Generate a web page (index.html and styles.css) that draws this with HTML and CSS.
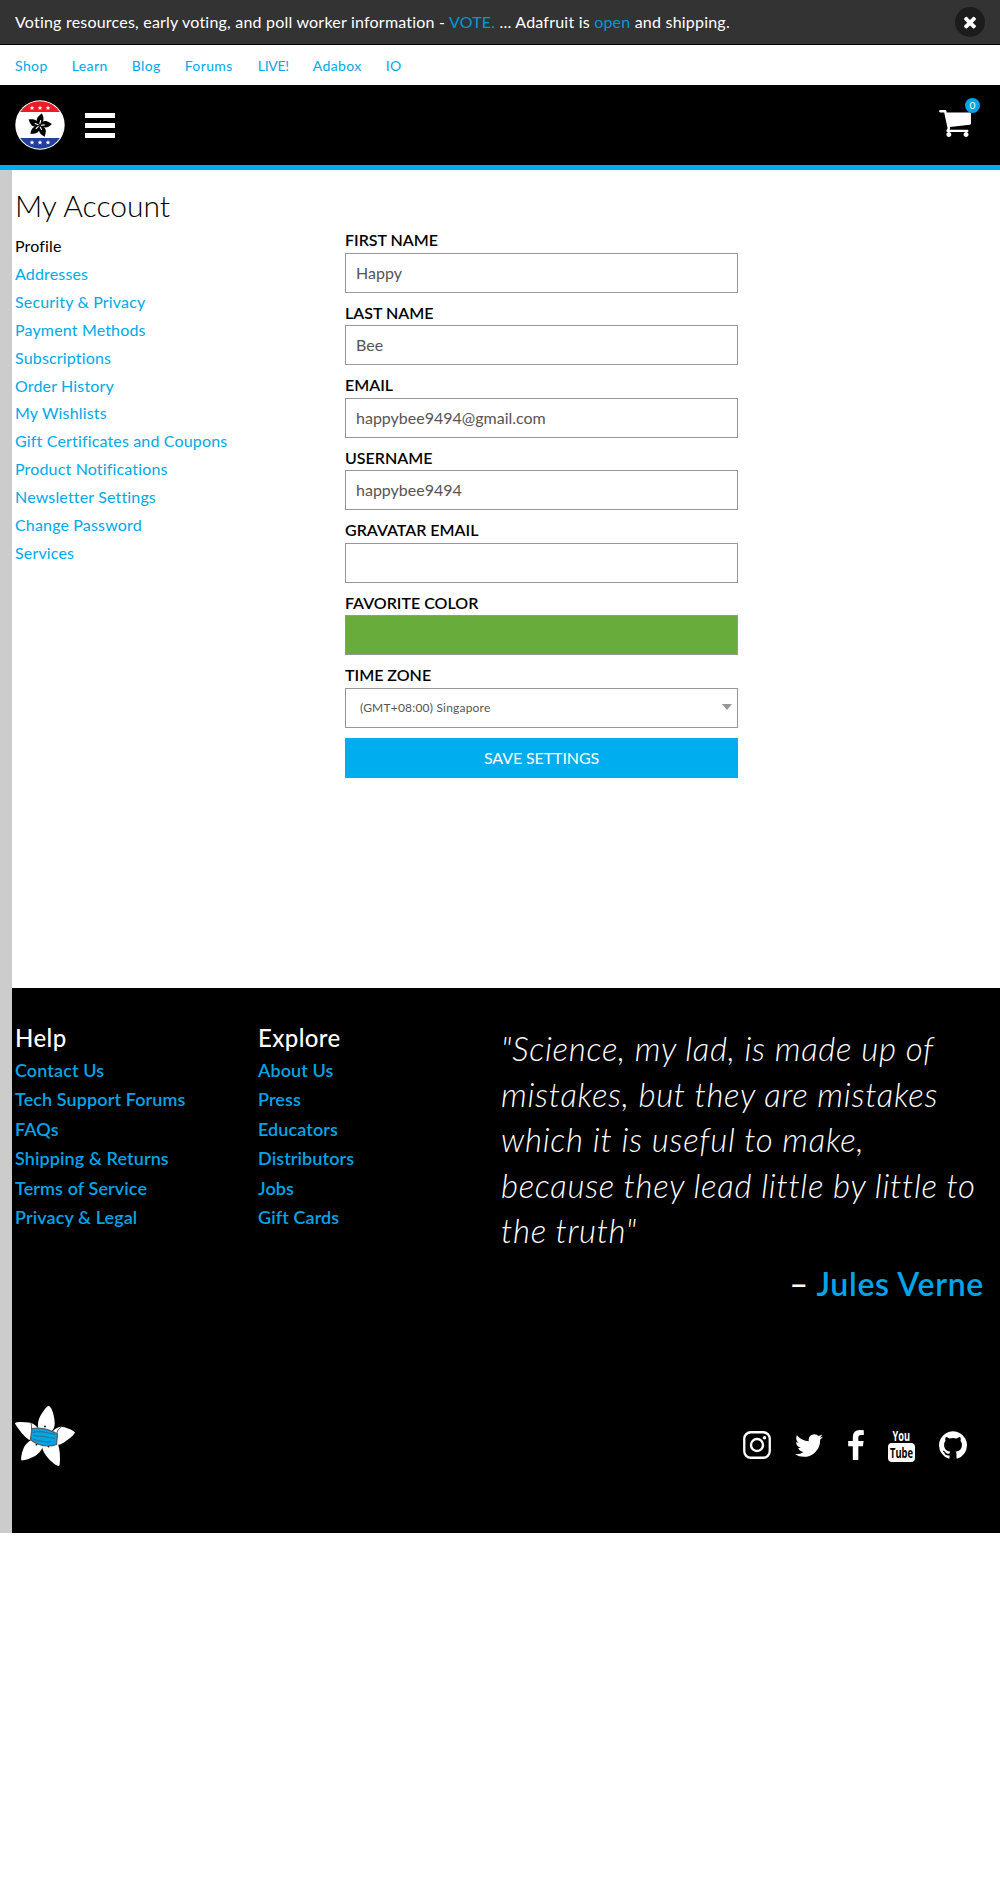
FILE: index.html
```html
<!DOCTYPE html>
<html lang="en">
<head>
<meta charset="utf-8">
<title>My Account</title>
<link rel="stylesheet" href="styles.css">
</head>
<body>
<div class="banner">
  <p class="banner-text">Voting resources, early voting, and poll worker information - <a href="#">VOTE.</a> ... Adafruit is <a href="#">open</a> and shipping.</p>
  <button class="close" aria-label="Close"><svg viewBox="0 0 1792 1792" width="18" height="18"><path d="M1490 1322q0 40-28 68l-136 136q-28 28-68 28t-68-28l-294-294-294 294q-28 28-68 28t-68-28l-136-136q-28-28-28-68t28-68l294-294-294-294q-28-28-28-68t28-68l136-136q28-28 68-28t68 28l294 294 294-294q28-28 68-28t68 28l136 136q28 28 28 68t-28 68l-294 294 294 294q28 28 28 68z"/></svg></button>
</div>
<nav class="sites">
  <a href="#">Shop</a><a href="#">Learn</a><a href="#">Blog</a><a href="#">Forums</a><a class="live" href="#">LIVE!</a><a href="#">Adabox</a><a href="#">IO</a>
</nav>
<header class="header">
  <svg class="logo" viewBox="0 0 50 50" width="50" height="50">
    <defs>
      <clipPath id="disc"><circle cx="25" cy="25" r="23.8"/></clipPath>
      <path id="star" d="M0-2.400.700-.800 2.300-.700 1.100.400 1.500 2 0 1.100-1.500 2-1.100.400-2.300-.700-.700-.800z"/>
      <path id="petal" d="M0 0C-3-2-4.200-5-3.200-7.500-2-10-.6-10.600.6-12.500 2-10.500 3.600-8 3-5 2.500-3 1.500-1.500 0 0z"/>
    </defs>
    <circle cx="25" cy="25" r="24.700" fill="#fff"/>
    <g clip-path="url(#disc)"><path fill="#ed1c24" d="M0 0h50v12H0z"/><path fill="#21409a" d="M0 38h50v12H0z"/></g>
    <g fill="#fff"><use href="#star" x="17" y="8"/><use href="#star" x="25" y="8"/><use href="#star" x="33" y="8"/><use href="#star" x="17" y="42.500"/><use href="#star" x="25" y="42.500"/><use href="#star" x="33" y="42.500"/></g>
    <g transform="translate(24.500 25.500)" fill="#000"><use href="#petal" transform="rotate(8)"/><use href="#petal" transform="rotate(80)"/><use href="#petal" transform="rotate(152)"/><use href="#petal" transform="rotate(224)"/><use href="#petal" transform="rotate(296)"/>
    <path d="M.4-1.800 1.200-5M1.800-.2 4.800-.6M.8 1.700 2 4M-1.300 1.200-3.400 3M-1.500-.8-4.300-2" stroke="#fff" stroke-width="1.100" stroke-linecap="round"/></g>
  </svg>
  <button class="menu" aria-label="Menu"><span></span><span></span><span></span></button>
  <a class="cart" href="#" aria-label="Cart"><svg viewBox="64 256 1664 1408" width="32" height="27"><path d="M704 1536q0 52-38 90t-90 38-90-38-38-90 38-90 90-38 90 38 38 90zm896 0q0 52-38 90t-90 38-90-38-38-90 38-90 90-38 90 38 38 90zm128-1088v512q0 24-16.500 42.500t-40.500 21.500l-1044 122q13 60 13 70 0 16-24 64h920q26 0 45 19t19 45-19 45-45 19h-1024q-26 0-45-19t-19-45q0-11 8-31.500t16-36 21.500-40 15.500-29.500l-177-823h-204q-26 0-45-19t-19-45 19-45 45-19h256q16 0 28.500 6.500t19.500 15.500 13 24.500 8 26 5.500 29.500 4.500 26h1201q26 0 45 19t19 45z"/></svg><span class="count">0</span></a>
</header>
<div class="page">
  <main class="account">
    <aside class="side">
      <h1>My Account</h1>
      <ul>
        <li>Profile</li>
        <li><a href="#">Addresses</a></li>
        <li><a href="#">Security &amp; Privacy</a></li>
        <li><a href="#">Payment Methods</a></li>
        <li><a href="#">Subscriptions</a></li>
        <li><a href="#">Order History</a></li>
        <li><a href="#">My Wishlists</a></li>
        <li><a href="#">Gift Certificates and Coupons</a></li>
        <li><a href="#">Product Notifications</a></li>
        <li><a href="#">Newsletter Settings</a></li>
        <li><a href="#">Change Password</a></li>
        <li><a href="#">Services</a></li>
      </ul>
    </aside>
    <form class="form">
      <label>FIRST NAME</label><div class="field">Happy</div>
      <label>LAST NAME</label><div class="field">Bee</div>
      <label>EMAIL</label><div class="field">happybee9494@gmail.com</div>
      <label>USERNAME</label><div class="field">happybee9494</div>
      <label>GRAVATAR EMAIL</label><div class="field"></div>
      <label>FAVORITE COLOR</label><div class="field color"></div>
      <label>TIME ZONE</label><div class="field select"><span>(GMT+08:00) Singapore</span><i class="arrow"></i></div>
      <button type="button" class="save">SAVE SETTINGS</button>
    </form>
  </main>
  <footer class="footer">
    <div class="columns">
      <section class="links">
        <h2>Help</h2>
        <ul>
          <li><a href="#">Contact Us</a></li>
          <li><a href="#">Tech Support Forums</a></li>
          <li><a href="#">FAQs</a></li>
          <li><a href="#">Shipping &amp; Returns</a></li>
          <li><a href="#">Terms of Service</a></li>
          <li><a href="#">Privacy &amp; Legal</a></li>
        </ul>
      </section>
      <section class="links">
        <h2>Explore</h2>
        <ul>
          <li><a href="#">About Us</a></li>
          <li><a href="#">Press</a></li>
          <li><a href="#">Educators</a></li>
          <li><a href="#">Distributors</a></li>
          <li><a href="#">Jobs</a></li>
          <li><a href="#">Gift Cards</a></li>
        </ul>
      </section>
      <section class="quote">
        <blockquote>"Science, my lad, is made up of<br>mistakes, but they are mistakes<br>which it is useful to make,<br>because they lead little by little to<br>the truth"</blockquote>
        <p class="author">– <a href="#">Jules Verne</a></p>
      </section>
    </div>
    <div class="bottom">
      <svg class="flower" viewBox="0 0 60 60" width="60" height="60">
        <g fill="#fff">
          <path d="M33 0C30 2 25.500 9 24 13 22.500 17 22.500 22 24 26H36C39 23 40 20 39.700 16.700 39.500 10 37 2 34.500.3 34 0 33.500-.3 33 0z"/>
          <path d="M0 17.500C-.5 15.500 8 15.600 14 16.500 19 17.500 22 20 24 24L18 34C15 34.500 13 33.500 11 31.500 7 28 2 21 0 17.500z"/>
          <path d="M60 26.500C58 23.500 50 21 46 20.700 42 21 38 24 36 28L40 38C42 39.500 45 38.700 47 37.500 52 35 59 29 60 26.500z"/>
          <path d="M6.500 54.500C5.500 52 7 46 8.500 42.500 10 38.500 14 35 18 33L28 38C28 42 25.500 46 21.500 49 18 51.500 10 54.500 6.500 54.500z"/>
          <path d="M43.500 60C40 59.500 34 53.500 31 49.500 28.500 46 26.500 42 27 38L42 36C44 40 44.500 44 44.800 48 45 52 45 57 44.500 59.300z"/>
        </g>
        <path d="M16.500 24Q17 18 15.700 16.500M41.500 28Q42.500 23 46 21" fill="none" stroke="#58595b"/>
        <circle cx="30" cy="20.500" r=".9" fill="#000"/><circle cx="21.500" cy="38.700" r=".9" fill="#000"/><circle cx="33.500" cy="40.500" r=".9" fill="#000"/>
        <path d="M17 22.500Q30 20.500 42.500 28L41.500 38.500Q34 41.500 24 38.500 18 36 15.500 33.500z" fill="#00a4e9" stroke="#58595b" stroke-width="1.200"/>
        <path d="M17.500 26.500Q24 24 40 28.500M18.500 29.500Q27 30 40 32.500M18 33Q26 36.500 37 35.700" fill="none" stroke="#3d6a80"/>
      </svg>
      <div class="social">
        <svg viewBox="0 0 28 28" width="28" height="28"><rect x="1.250" y="1.250" width="25.500" height="25.500" rx="6.500" fill="none" stroke="#fff" stroke-width="2.300"/><circle cx="14" cy="14" r="6" fill="none" stroke="#fff" stroke-width="2.400"/><circle cx="21.500" cy="6.700" r="1.700"/></svg>
        <svg class="twitter" viewBox="108 256 1576 1280" width="28" height="23"><path d="M1684 408q-67 98-162 167 1 14 1 42 0 130-38 259.500t-115.500 248.500-184.500 210.500-258 146-323 54.500q-271 0-496-145 35 4 78 4 225 0 401-138-105-2-188-64.500t-114-159.500q33 5 61 5 43 0 85-11-112-23-185.500-111.500t-73.500-205.500v-4q68 38 146 41-66-44-105-115t-39-154q0-88 44-163 121 149 294.500 238.500t371.500 99.500q-8-38-8-74 0-134 94.500-228.500t228.500-94.500q140 0 236 102 109-21 205-78-37 115-142 178 93-10 186-50z"/></svg>
        <svg viewBox="479 0 864 1664" width="16" height="30"><path d="M1343 12v264h-157q-86 0-116 36t-30 108v189h293l-39 296h-254v759h-306v-759h-255v-296h255v-218q0-186 104-288.500t277-102.500q147 0 228 12z"/></svg>
        <svg class="youtube" viewBox="0 0 27 33" width="27" height="33"><text x="4.500" y="12" font-size="14.400" textLength="17.500" lengthAdjust="spacingAndGlyphs">You</text><rect y="14" width="27" height="19" rx="4"/><text class="knock" x="2" y="29.300" font-size="14.400" textLength="23" lengthAdjust="spacingAndGlyphs">Tube</text></svg>
        <svg viewBox="128 128 1536 1500" width="28" height="28"><path d="M896 128q209 0 385.500 103t279.500 279.500 103 385.500q0 251-146.500 451.500t-378.500 277.500q-27 5-40-7t-13-30q0-3 .5-76.500t.5-134.500q0-97-52-142 57-6 102.500-18t94-39 81-66.500 53-105 20.500-150.500q0-119-79-206 37-91-8-204-28-9-81 11t-92 44l-38 24q-93-26-192-26t-192 26q-16-11-42.500-27t-83.500-38.500-85-13.500q-45 113-8 204-79 87-79 206 0 85 20.500 150t52.500 105 80.500 67 94 39 102.500 18q-39 36-49 103-21 10-45 15t-57 5-65.500-21.500-55.500-62.500q-19-32-48.500-52t-49.500-24l-20-3q-21 0-29 4.500t-5 11.500 9 14 13 12l7 5q22 10 43.500 38t31.500 51l10 23q13 38 44 61.500t67 30 69.500 7 55.500-3.500l23-4q0 38 .5 88.500t.5 54.500q0 18-13 30t-40 7q-232-77-378.500-277.500t-146.500-451.500q0-209 103-385.500t279.500-279.500 385.500-103z"/></svg>
      </div>
    </div>
  </footer>
</div>
</body>
</html>
```
FILE: styles.css
```css
* { box-sizing: border-box; }
body { margin: 0; background: #fff; color: #000; font-family: Lato, "Open Sans", sans-serif; font-size: 16px; letter-spacing: .16px; }
a { color: #00a9e9; text-decoration: none; }
h1, h2, p, ul, blockquote { margin: 0; padding: 0; }
ul { list-style: none; }
button { border: 0; padding: 0; font: inherit; letter-spacing: inherit; }
svg { display: block; fill: #fff; }

.banner { height: 45px; border-bottom: 1px solid #000; background: #333; color: #fff; display: flex; justify-content: space-between; padding: 0 15px; }
.banner-text { line-height: 43px; letter-spacing: .21px; }
.banner a { color: #0099d6; }
.close { width: 30px; height: 30px; margin-top: 7px; border-radius: 50%; background: #1c1c1c; display: grid; place-items: center; }

.sites { height: 40px; padding: 2px 15px 0; display: flex; gap: 24px; font-size: 14px; line-height: 38px; letter-spacing: .4px; }
.sites .live { margin-left: 1px; letter-spacing: -.3px; }

.header { height: 85px; padding: 0 21px 0 15px; background: #000; border-bottom: 5px solid #00adee; display: flex; }
.logo { margin-top: 15px; }
.menu { width: 30px; height: 25px; margin: 28px 0 0 20px; background: none; display: flex; flex-direction: column; justify-content: space-between; }
.menu span { height: 5px; width: 30px; background: #fff; }
.cart { position: relative; margin: 25px 8px 0 auto; }
.count { position: absolute; left: 26px; top: -12px; width: 15px; height: 15px; border-radius: 50%; background: #00a4e9; color: #fff; font-size: 10px; line-height: 15px; text-align: center; letter-spacing: 0; }

.page { border-left: 12px solid #ccc; }
.account { height: 818px; display: flex; }
.side { width: 333px; padding: 15px 0 0 3px; }
.side h1 { font-size: 30px; font-weight: 300; line-height: 40px; margin-bottom: 7px; letter-spacing: 0; }
.side li { line-height: 27.900px; }

.form { width: 393px; padding-top: 58.400px; }
.form label { display: block; height: 24.500px; line-height: 23.500px; font-weight: 600; letter-spacing: 0; }
.field { height: 40px; margin-bottom: 8px; padding: 0 10px; border: 1px solid #979797; color: #555; line-height: 37px; letter-spacing: 0; }
.color { background: #68ac3b; }
.select { display: flex; justify-content: space-between; align-items: center; padding: 0 5px 0 14px; font-size: 12px; letter-spacing: .2px; }
.arrow { border: 5px solid transparent; border-top: 6px solid #979797; border-bottom: 0; margin-top: -2px; }
.save { display: block; width: 100%; height: 40px; margin-top: 10px; padding-bottom: 1px; background: #00adee; color: #fff; letter-spacing: -.100px; }

.footer { height: 545px; padding: 35px 16px 0 3px; background: #000; color: #fff; }
.footer a { color: #00a4e9; }
.columns { display: flex; height: 383px; }
.links { width: 243px; font-size: 18px; font-weight: 600; letter-spacing: .1px; }
.links h2 { font-size: 24px; font-weight: 500; line-height: 30px; margin-bottom: 2.500px; letter-spacing: .4px; }
.links li { line-height: 29.600px; }
.quote { flex: 1; padding-top: 3px; font-size: 32px; line-height: 45.600px; }
.quote blockquote { font-size: 33px; font-style: italic; font-weight: 300; white-space: nowrap; letter-spacing: .700px; }
.author { margin-top: 7px; text-align: right; font-weight: 600; letter-spacing: .700px; }
.bottom { display: flex; justify-content: space-between; align-items: flex-start; }
.social { display: flex; align-items: center; gap: 24px; margin: 22.500px 17px 0 0; }
.twitter { margin-right: 1px; }
.youtube { overflow: visible; font-family: "Liberation Sans Narrow", "Open Sans", sans-serif; font-weight: 700; letter-spacing: 0; }
.knock { fill: #000; }
```
